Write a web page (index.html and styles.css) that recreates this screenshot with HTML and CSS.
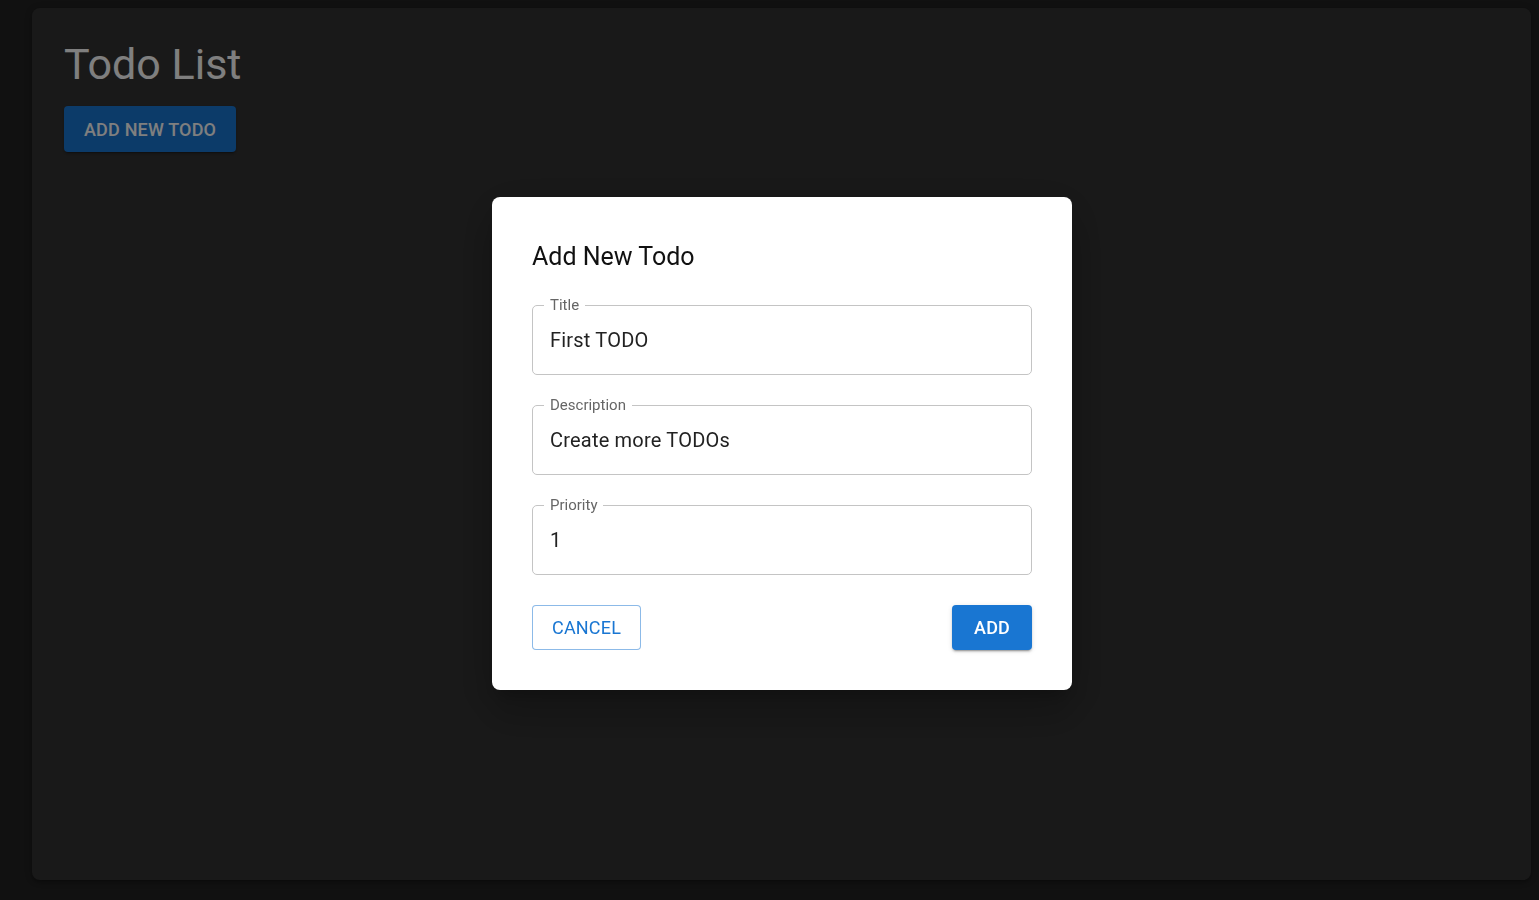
FILE: index.html
```html
<!DOCTYPE html>
<html lang="en">
<head>
<meta charset="utf-8">
<title>Todo List</title>
<link rel="stylesheet" href="styles.css">
</head>
<body>
<div class="page">
  <main class="paper">
    <h1 class="page-title">Todo List</h1>
    <button class="btn btn-large">Add New Todo</button>
  </main>
</div>
<div class="backdrop">
  <div class="dialog" role="dialog" aria-labelledby="dlg-title">
    <h2 class="dialog-title" id="dlg-title">Add New Todo</h2>
    <div class="fields">
      <div class="field">
        <span class="field-label">Title</span>
        <span class="field-value">First TODO</span>
      </div>
      <div class="field">
        <span class="field-label">Description</span>
        <span class="field-value">Create more TODOs</span>
      </div>
      <div class="field">
        <span class="field-label">Priority</span>
        <span class="field-value">1</span>
      </div>
    </div>
    <div class="actions">
      <button class="btn btn-outlined">Cancel</button>
      <button class="btn btn-contained">Add</button>
    </div>
  </div>
</div>
</body>
</html>
```

FILE: styles.css
```css
* { box-sizing: border-box; }
html, body { margin: 0; padding: 0; }
body {
  background: #222222;
  font-family: Roboto, "Liberation Sans", sans-serif;
  width: 1539px;
  height: 900px;
  overflow: hidden;
}
.page {
  padding: 8px 8px 20px 32px;
  height: 900px;
}
.paper {
  height: 872px;
  background: #333333;
  border-radius: 8px;
  box-shadow: 0 3px 3px -2px rgba(0,0,0,0.2), 0 3px 4px 0 rgba(0,0,0,0.14), 0 1px 8px 0 rgba(0,0,0,0.12);
  padding: 28px 32px;
  display: flex;
  flex-direction: column;
  align-items: flex-start;
}
.page-title {
  margin: 0 0 14px;
  font-size: 43px;
  font-weight: 400;
  line-height: 56px;
  color: #ffffff;
}
.btn {
  font-family: Roboto, "Liberation Sans", sans-serif;
  text-transform: uppercase;
  font-weight: 500;
  border-radius: 4px;
  cursor: pointer;
  letter-spacing: 0.01em;
}
.btn-large {
  height: 46px;
  padding: 0 20px;
  font-size: 18px;
  border: 0;
  background: #1976d2;
  color: #ffffff;
  box-shadow: 0 3px 1px -2px rgba(0,0,0,0.2), 0 2px 2px 0 rgba(0,0,0,0.14), 0 1px 5px 0 rgba(0,0,0,0.12);
}
.backdrop {
  position: fixed;
  inset: 0;
  background: rgba(0,0,0,0.5);
  display: flex;
  align-items: flex-start;
  justify-content: center;
  padding-top: 197px;
  padding-left: 25px;
}
.dialog {
  width: 580px;
  background: #ffffff;
  border-radius: 8px;
  padding: 44px 40px 40px;
  box-shadow: 0 11px 15px -7px rgba(0,0,0,0.2), 0 24px 38px 3px rgba(0,0,0,0.14), 0 9px 46px 8px rgba(0,0,0,0.12);
}
.dialog-title {
  margin: 0 0 32px;
  font-size: 25px;
  font-weight: 400;
  line-height: 32px;
  color: #111111;
}
.fields {
  display: flex;
  flex-direction: column;
  gap: 30px;
}
.field {
  position: relative;
  height: 70px;
  border: 1px solid #c4c4c4;
  border-radius: 5px;
  display: flex;
  align-items: center;
  padding: 0 17px;
}
.field-label {
  position: absolute;
  left: 11px;
  top: -11px;
  padding: 0 6px;
  background: #ffffff;
  font-size: 15px;
  line-height: 20px;
  color: #666666;
}
.field-value {
  font-size: 20px;
  color: #222222;
  letter-spacing: 0.01em;
}
.actions {
  margin-top: 30px;
  display: flex;
  justify-content: space-between;
}
.btn-outlined {
  height: 45px;
  padding: 0 19px;
  font-size: 18px;
  font-weight: 400;
  background: #ffffff;
  color: #1976d2;
  border: 1px solid rgba(25,118,210,0.5);
}
.btn-contained {
  height: 45px;
  padding: 0 22px;
  font-size: 18px;
  border: 0;
  background: #1976d2;
  color: #ffffff;
  box-shadow: 0 3px 1px -2px rgba(0,0,0,0.2), 0 2px 2px 0 rgba(0,0,0,0.14), 0 1px 5px 0 rgba(0,0,0,0.12);
}
```
